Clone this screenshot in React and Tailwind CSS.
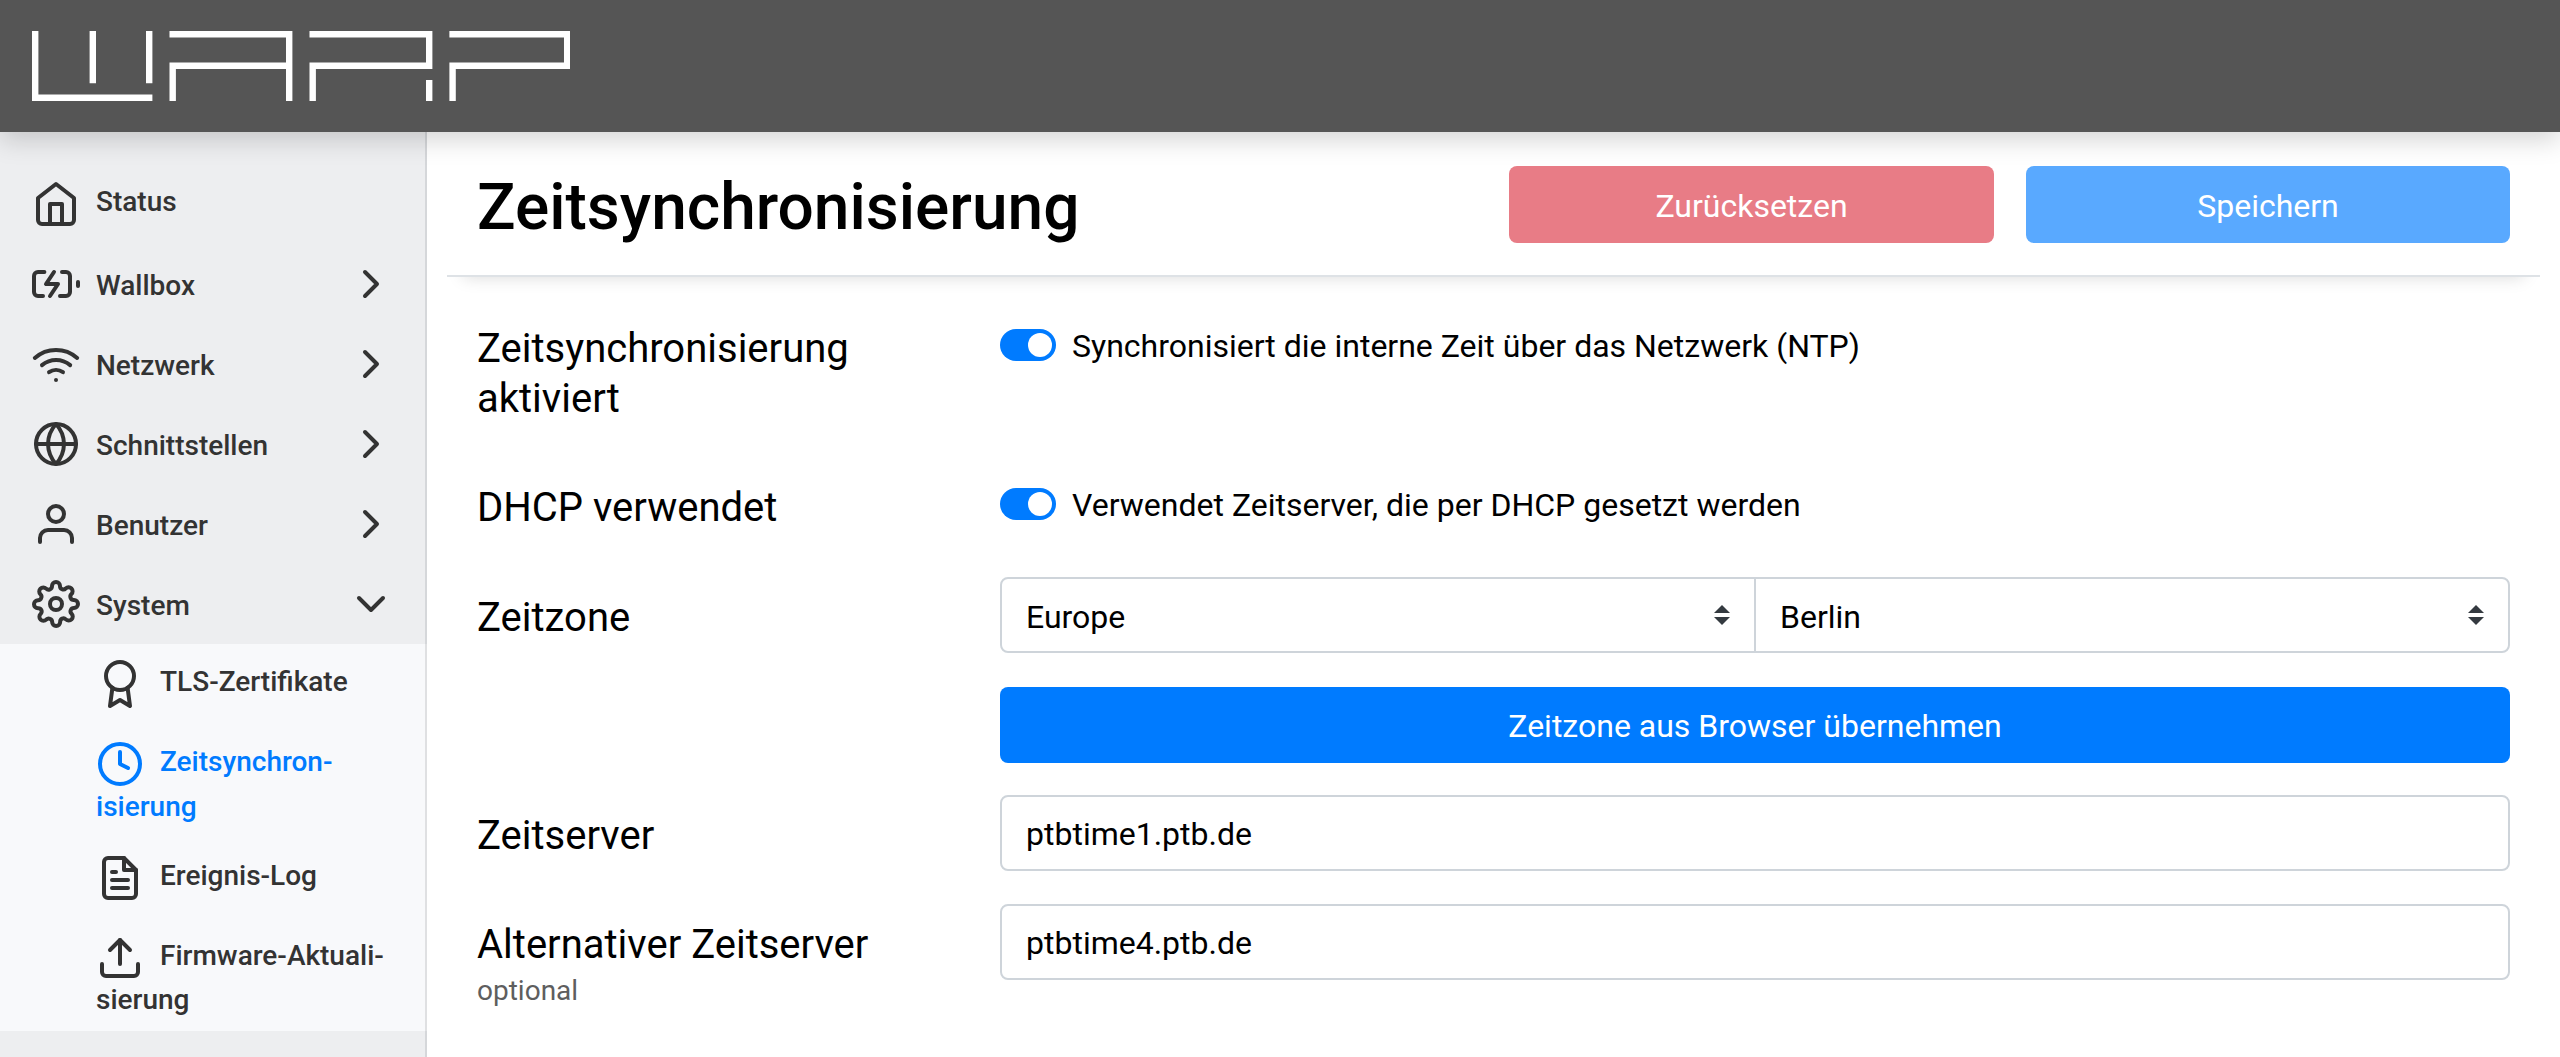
import React from "react";
import { ChevronRight, ChevronDown } from "lucide-react";

function Svg({ children, className = "" }) {
  return (
    <svg
      viewBox="0 0 24 24"
      className={`size-12 shrink-0 ${className}`}
      fill="none"
      stroke="currentColor"
      strokeWidth="2"
      strokeLinecap="round"
      strokeLinejoin="round"
    >
      {children}
    </svg>
  );
}

const HomeIcon = () => (
  <Svg>
    <path d="M3 9l9-7 9 7v11a2 2 0 0 1-2 2H5a2 2 0 0 1-2-2z" />
    <polyline points="9 22 9 12 15 12 15 22" />
  </Svg>
);
const BatteryIcon = () => (
  <Svg>
    <path d="M5.5 18H3a2 2 0 0 1-2-2V8a2 2 0 0 1 2-2h3.19M14 18h3a2 2 0 0 0 2-2V8a2 2 0 0 0-2-2h-2" />
    <line x1="23" y1="13" x2="23" y2="11" />
    <polyline points="11 6 7 12 13 12 9 18" />
  </Svg>
);
const WifiIcon = () => (
  <Svg>
    <path d="M5 12.55a11 11 0 0 1 14.08 0" />
    <path d="M1.42 9a16 16 0 0 1 21.16 0" />
    <path d="M8.53 16.11a6 6 0 0 1 6.95 0" />
    <line x1="12" y1="20" x2="12.01" y2="20" />
  </Svg>
);
const GlobeIcon = () => (
  <Svg>
    <circle cx="12" cy="12" r="10" />
    <line x1="2" y1="12" x2="22" y2="12" />
    <path d="M12 2a15.3 15.3 0 0 1 4 10 15.3 15.3 0 0 1-4 10 15.3 15.3 0 0 1-4-10 15.3 15.3 0 0 1 4-10z" />
  </Svg>
);
const UserIcon = () => (
  <Svg>
    <path d="M20 21v-2a4 4 0 0 0-4-4H8a4 4 0 0 0-4 4v2" />
    <circle cx="12" cy="7" r="4" />
  </Svg>
);
const GearIcon = () => (
  <Svg>
    <circle cx="12" cy="12" r="3" />
    <path d="M19.4 15a1.65 1.65 0 0 0 .33 1.82l.06.06a2 2 0 0 1 0 2.83 2 2 0 0 1-2.83 0l-.06-.06a1.65 1.65 0 0 0-1.82-.33 1.65 1.65 0 0 0-1 1.51V21a2 2 0 0 1-2 2 2 2 0 0 1-2-2v-.09A1.65 1.65 0 0 0 9 19.4a1.65 1.65 0 0 0-1.82.33l-.06.06a2 2 0 0 1-2.83 0 2 2 0 0 1 0-2.83l.06-.06a1.65 1.65 0 0 0 .33-1.82 1.65 1.65 0 0 0-1.51-1H3a2 2 0 0 1-2-2 2 2 0 0 1 2-2h.09A1.65 1.65 0 0 0 4.6 9a1.65 1.65 0 0 0-.33-1.82l-.06-.06a2 2 0 0 1 0-2.83 2 2 0 0 1 2.83 0l.06.06a1.65 1.65 0 0 0 1.82.33H9a1.65 1.65 0 0 0 1-1.51V3a2 2 0 0 1 2-2 2 2 0 0 1 2 2v.09a1.65 1.65 0 0 0 1 1.51 1.65 1.65 0 0 0 1.82-.33l.06-.06a2 2 0 0 1 2.83 0 2 2 0 0 1 0 2.83l-.06.06a1.65 1.65 0 0 0-.33 1.82V9a1.65 1.65 0 0 0 1.51 1H21a2 2 0 0 1 2 2 2 2 0 0 1-2 2h-.09a1.65 1.65 0 0 0-1.51 1z" />
  </Svg>
);
const AwardIcon = () => (
  <Svg>
    <circle cx="12" cy="8" r="7" />
    <polyline points="8.21 13.89 7 23 12 20 17 23 15.79 13.88" />
  </Svg>
);
const ClockIcon = () => (
  <Svg>
    <circle cx="12" cy="12" r="10" />
    <polyline points="12 6 12 12 16 14" />
  </Svg>
);
const FileIcon = () => (
  <Svg>
    <path d="M14 2H6a2 2 0 0 0-2 2v16a2 2 0 0 0 2 2h12a2 2 0 0 0 2-2V8z" />
    <polyline points="14 2 14 8 20 8" />
    <line x1="16" y1="13" x2="8" y2="13" />
    <line x1="16" y1="17" x2="8" y2="17" />
    <polyline points="10 9 9 9 8 9" />
  </Svg>
);
const UploadIcon = () => (
  <Svg>
    <path d="M21 15v4a2 2 0 0 1-2 2H5a2 2 0 0 1-2-2v-4" />
    <polyline points="17 8 12 3 7 8" />
    <line x1="12" y1="3" x2="12" y2="15" />
  </Svg>
);

function Logo() {
  return (
    <svg
      viewBox="0 0 538.4 70"
      className="h-[70px] w-[538.4px]"
      fill="none"
      stroke="#fff"
      strokeWidth="6.4"
    >
      <path d="M3.2 0V66.8H120.4M60.8 0V52.3M117.2 0V52.3" />
      <path d="M137.5 3.2H257.2V70M140.7 70V34.7H257.2" />
      <path d="M277.5 3.2H397.2V34.7H280.7V70M397.2 49V70" />
      <path d="M417.4 3.2H535.2V34.7H420.6V70" />
    </svg>
  );
}

const NAV = [
  { label: "Wallbox", Icon: BatteryIcon },
  { label: "Netzwerk", Icon: WifiIcon },
  { label: "Schnittstellen", Icon: GlobeIcon },
  { label: "Benutzer", Icon: UserIcon },
  { label: "System", Icon: GearIcon, open: true },
];

const SUB = [
  { lines: ["TLS-Zertifikate"], Icon: AwardIcon },
  { lines: ["Zeitsynchron-", "isierung"], Icon: ClockIcon, active: true, wrap: "-mt-[3px]" },
  { lines: ["Ereignis-Log"], Icon: FileIcon },
  { lines: ["Firmware-Aktuali-", "sierung"], Icon: UploadIcon, wrap: "-mt-1" },
];

function Sidebar() {
  return (
    <nav className="w-[427px] shrink-0 border-r-2 border-[#d5d7da] bg-[#edeef0] pt-8 text-[28px] leading-[43px] font-medium text-[#333]">
      <a className="flex h-20 items-start gap-4 px-8 pt-4">
        <HomeIcon />
        <span>Status</span>
      </a>
      {NAV.map(({ label, Icon, open }) => {
        const Chevron = open ? ChevronDown : ChevronRight;
        return (
          <a key={label} className="flex h-20 items-start gap-4 pt-4 pr-[30px] pl-8">
            <Icon />
            <span className="grow pt-1">{label}</span>
            <Chevron className="size-12 shrink-0" />
          </a>
        );
      })}
      <div className="-mr-0.5 border-r-2 border-[#dfe0e2] bg-[#f8f9fb]">
        {SUB.map(({ lines, Icon, active, wrap }) => (
          <a
            key={lines[0]}
            className={`block py-4 pl-24 whitespace-nowrap ${active ? "text-[#007bff]" : ""}`}
          >
            <span className="flex h-12 items-start gap-4">
              <Icon />
              <span>{lines[0]}</span>
            </span>
            {lines[1] && <span className={`block h-[37px] ${wrap}`}>{lines[1]}</span>}
          </a>
        ))}
      </div>
    </nav>
  );
}

function Row({ label, hint, className = "", children }) {
  return (
    <div className={`flex items-start ${className}`}>
      <div className="w-[523px] shrink-0 pt-4">
        <div className="w-[420px] text-[40px] leading-[50px]">{label}</div>
        {hint && <div className="text-[28px] leading-[42px] text-[#5e5e5e]">{hint}</div>}
      </div>
      <div className="grow">{children}</div>
    </div>
  );
}

function Toggle({ label }) {
  return (
    <label className="flex gap-4 pt-[14px]">
      <span className="mt-[7px] flex h-8 w-14 justify-end rounded-full bg-[#007bff] p-1">
        <span className="size-6 rounded-full bg-white" />
      </span>
      <span className="leading-[48px]">{label}</span>
    </label>
  );
}

function SelectBox({ value, className }) {
  return (
    <div
      className={`flex h-[76px] flex-1 items-start justify-between border-2 border-[#ced4da] bg-white px-6 pt-[14px] ${className}`}
    >
      <span>{value}</span>
      <svg viewBox="0 0 4 5" className="mt-3 h-5 w-4" fill="#343a40">
        <path d="M2 0L0 2h4zm0 5L0 3h4z" />
      </svg>
    </div>
  );
}

function TextInput({ value }) {
  return (
    <div className="h-[76px] rounded-lg border-2 border-[#ced4da] bg-white px-6 pt-[13px]">
      {value}
    </div>
  );
}

export default function App() {
  return (
    <div className="flex h-[1057px] w-[2560px] flex-col overflow-hidden bg-white font-[Roboto,sans-serif] text-[32px] leading-[48px] text-black">
      <header className="relative z-10 flex h-[132px] shrink-0 items-center bg-[#555] pl-8 shadow-[0_8px_24px_rgba(0,0,0,0.17)]">
        <Logo />
      </header>
      <div className="flex grow">
        <Sidebar />
        <main className="grow px-5">
          <div className="flex h-[145px] items-start justify-between border-b-2 border-[#dee2e6] px-[30px] pt-[34px] shadow-[0_16px_16px_-16px_rgba(0,0,0,0.15)]">
            <h1 className="pt-[3px] text-[64px] leading-[77px] font-medium">Zeitsynchronisierung</h1>
            <div className="flex gap-8 text-white">
              <button className="h-[77px] w-[485px] rounded-lg bg-[#e87c86] pt-[3px]">
                Zurücksetzen
              </button>
              <button className="h-[77px] w-[484px] rounded-lg bg-[#59a9ff] pt-[3px]">
                Speichern
              </button>
            </div>
          </div>
          <div className="px-[30px] pt-[31px]">
            <Row label="Zeitsynchronisierung aktiviert" className="h-[159px]">
              <Toggle label="Synchronisiert die interne Zeit über das Netzwerk (NTP)" />
            </Row>
            <Row label="DHCP verwendet" className="h-[110px]">
              <Toggle label="Verwendet Zeitserver, die per DHCP gesetzt werden" />
            </Row>
            <Row label="Zeitzone" className="h-[218px]">
              <div className="flex">
                <SelectBox value="Europe" className="rounded-l-lg" />
                <SelectBox value="Berlin" className="-ml-0.5 rounded-r-lg" />
              </div>
              <button className="mt-[34px] h-[76px] w-full rounded-lg bg-[#007bff] pt-0.5 text-white">
                Zeitzone aus Browser übernehmen
              </button>
            </Row>
            <Row label="Zeitserver" className="h-[109px]">
              <TextInput value="ptbtime1.ptb.de" />
            </Row>
            <Row label="Alternativer Zeitserver" hint="optional">
              <TextInput value="ptbtime4.ptb.de" />
            </Row>
          </div>
        </main>
      </div>
    </div>
  );
}
